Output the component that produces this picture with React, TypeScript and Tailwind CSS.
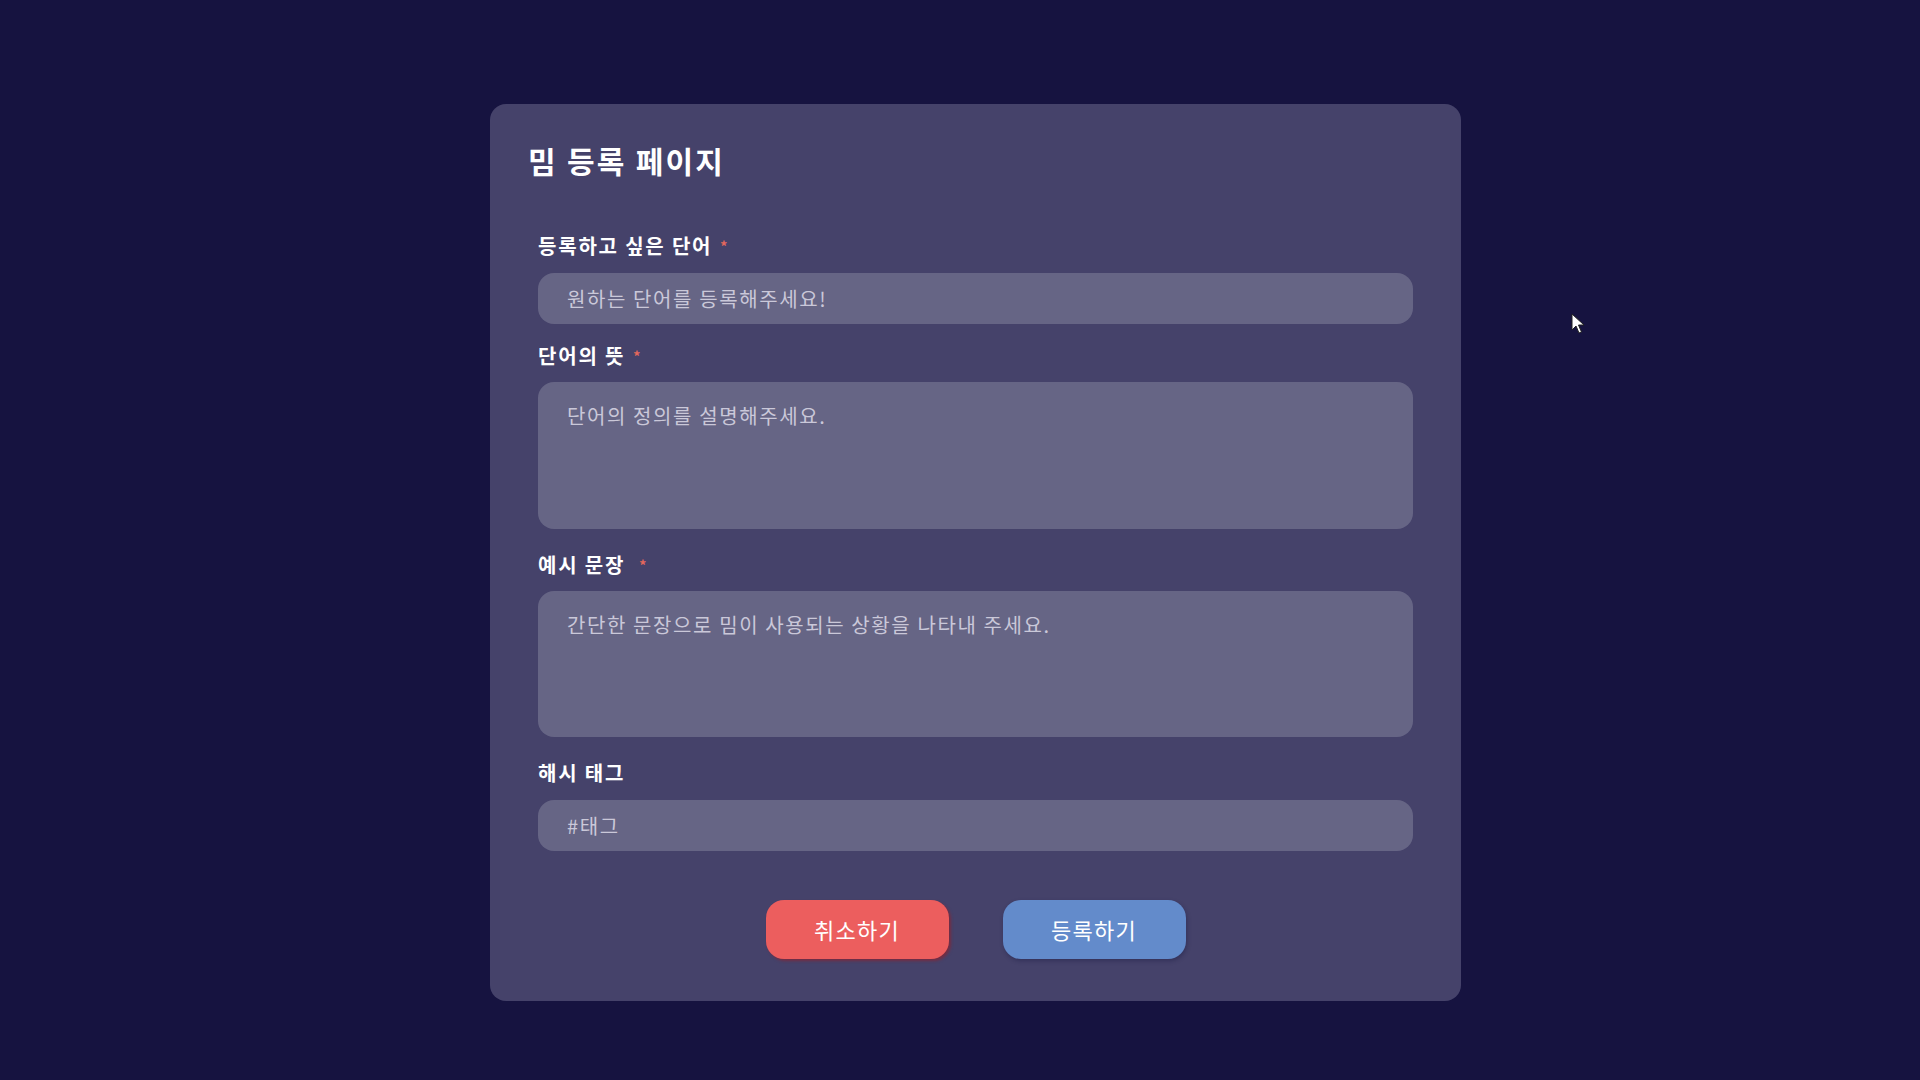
export default function App() {
  return (
    <div
      className="relative min-h-screen bg-[#161340] pt-[104px] pl-[490px]"
      style={{ fontFamily: '"Noto Sans CJK KR", "Noto Sans", sans-serif' }}
    >
      {/* Form card */}
      <div className="w-[971px] rounded-2xl bg-[#45426a] px-[38px] pt-[36px] pb-[42px]">
        <h1 className="text-[30px] font-bold leading-[40px] tracking-[0.075em] text-white">밈 등록 페이지</h1>

        <form className="mt-[52px] flex flex-col px-[10px]">
          <label className="mb-[13px] flex items-center text-xl font-bold leading-7 tracking-[0.09em] text-white">
            등록하고 싶은 단어
            <span className="ml-2 text-sm leading-none text-[#e5685c]">*</span>
          </label>
          <input
            className="h-[51px] w-full rounded-2xl bg-[#666585] px-[29px] text-xl tracking-[0.08em] text-white outline-none placeholder:text-[#cac8d9]"
            placeholder="원하는 단어를 등록해주세요!"
          />

          <label className="mt-[18px] mb-[12px] flex items-center text-xl font-bold leading-7 tracking-[0.09em] text-white">
            단어의 뜻
            <span className="ml-2 text-sm leading-none text-[#e5685c]">*</span>
          </label>
          <textarea
            className="block h-[147px] w-full resize-none rounded-2xl bg-[#666585] px-[29px] py-5 text-xl leading-7 tracking-[0.08em] text-white outline-none placeholder:text-[#cac8d9]"
            placeholder="단어의 정의를 설명해주세요."
          />

          <label className="mt-[22px] mb-[12px] flex items-center text-xl font-bold leading-7 tracking-[0.09em] text-white">
            예시 문장
            <span className="ml-[14px] text-sm leading-none text-[#e5685c]">*</span>
          </label>
          <textarea
            className="block h-[146px] w-full resize-none rounded-2xl bg-[#666585] px-[29px] py-5 text-xl leading-7 tracking-[0.08em] text-white outline-none placeholder:text-[#cac8d9]"
            placeholder="간단한 문장으로 밈이 사용되는 상황을 나타내 주세요."
          />

          <label className="mt-[22px] mb-[13px] flex items-center text-xl font-bold leading-7 tracking-[0.09em] text-white">
            해시 태그
          </label>
          <input
            className="h-[51px] w-full rounded-2xl bg-[#666585] px-[29px] text-xl tracking-[0.08em] text-white outline-none placeholder:text-[#cac8d9]"
            placeholder="#태그"
          />

          <div className="mt-[49px] flex justify-center gap-[54px]">
            <button
              type="button"
              className="h-[59px] w-[183px] rounded-[18px] bg-[#ec5e5e] text-[22px] tracking-[0.06em] text-white shadow-[2px_2px_3px_rgba(150,30,40,0.6)]"
            >
              취소하기
            </button>
            <button
              type="button"
              className="h-[59px] w-[183px] rounded-[18px] bg-[#638bcb] text-[22px] tracking-[0.06em] text-white shadow-[1px_2px_4px_rgba(20,20,60,0.35)]"
            >
              등록하기
            </button>
          </div>
        </form>
      </div>

      {/* Mouse cursor */}
      <svg className="absolute left-[1571px] top-[313px]" width="14" height="22" viewBox="0 0 14 22">
        <path d="M1 1 L1 17 L5 13 L8 20 L10.5 19 L7.5 12 L13 12 Z" fill="#fff" stroke="#222" strokeWidth="1" />
      </svg>
    </div>
  );
}
